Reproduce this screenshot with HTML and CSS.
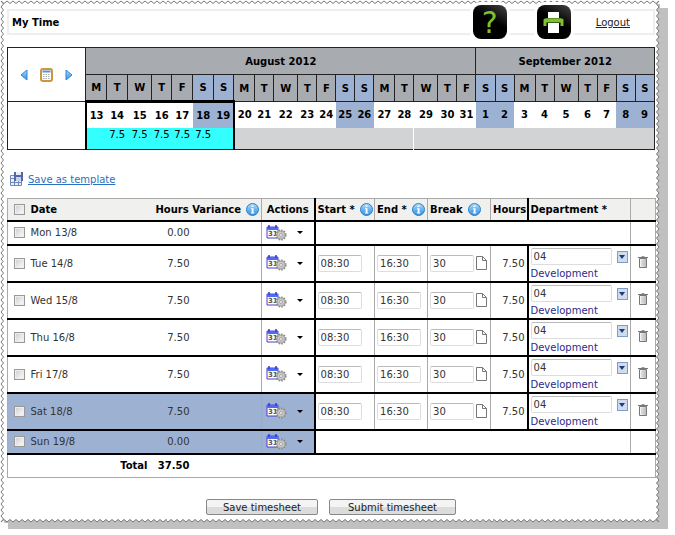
FILE: index.html
```html
<!DOCTYPE html>
<html lang="en">
  <head>
    <meta charset="UTF-8" />
    <meta name="viewport" content="width=device-width, initial-scale=1.0" />
    <title>My Time</title>
    <link rel="stylesheet" href="styles.css">
  </head>
  <body>
    <!-- Shared icons -->
    <svg class="sprite" aria-hidden="true">
      <defs>
        <linearGradient id="blue" x1="0" y1="0" x2="0" y2="1">
          <stop offset="0" stop-color="#a9dcff" />
          <stop offset="1" stop-color="#2f8fe0" />
        </linearGradient>
        <linearGradient id="bin" x1="0" y1="0" x2="1" y2="0">
          <stop offset="0" stop-color="#fff" />
          <stop offset="1" stop-color="#b8b8b8" />
        </linearGradient>
      </defs>
      <symbol id="info" viewBox="0 0 13 13">
        <circle cx="6.5" cy="6.5" r="6" fill="url(#blue)" stroke="#2a80cc" />
        <path d="M5.5 2.5h2v1.6h-2zM5 5.2h2.5v4.3h.8v1H4.9v-1h.8V6.2H5z" fill="#fff" />
      </symbol>
      <symbol id="actions" viewBox="0 0 22 16">
        <path d="M1 2h11v11H1z" fill="#fff" stroke="#4a3fd0" />
        <path d="M1 2h11v3H1z" fill="#4b6cf5" />
        <path d="M3 0v3M10 0v3" stroke="#3b36c8" stroke-width="1.5" />
        <text x="2" y="11" font-size="7" font-weight="bold" fill="#555">31</text>
        <circle cx="15" cy="10" r="4.7" fill="#c4c4c4" stroke="#8c8c8c" stroke-width="1.8" stroke-dasharray="1.6 1.1" />
        <circle cx="15" cy="10" r="3.8" fill="#c9c9c9" stroke="#9a9a9a" stroke-width=".6" />
        <circle cx="15" cy="10" r="1.5" fill="#eee" stroke="#8a8a8a" stroke-width=".6" />
      </symbol>
      <symbol id="note" viewBox="0 0 11 14">
        <path d="M.5.5h6l4 4v9H.5zM6.5.5v4h4" fill="#fff" stroke="#777" />
      </symbol>
      <symbol id="trash" viewBox="0 0 10 12">
        <path d="M1.5 2.5h7v9h-7z" fill="url(#bin)" stroke="#777" />
        <path d="M0 1.5h10" stroke="#777" />
        <path d="M3.5 .5h3" stroke="#999" />
        <path d="M4 4v6M6 4v6" stroke="#bbb" stroke-width=".7" />
      </symbol>
    </svg>

    <div class="shadow">
    <div class="sheet">
      <header class="topbar">
        <h1>My Time</h1>
        <a class="tile help" href="#" aria-label="Help">?</a>
        <a class="tile print" href="#" aria-label="Print">
          <svg width="21" height="23" viewBox="0 0 21 23">
            <path d="M5 1h11v6H5z" fill="#fff" />
            <path d="M2 15V9h17v6" fill="none" stroke="#7fc02e" stroke-width="3" stroke-linejoin="round" />
            <path d="M5 12h11v10H5z" fill="#fff" />
            <path d="M3 9.500h15" stroke="#7fc02e" stroke-width="4" />
          </svg>
        </a>
        <a class="logout" href="#">Logout</a>
      </header>

      <table class="calendar">
        <colgroup>
          <col class="w78"><col class="w21"><col class="w21"><col class="w24"><col class="w20"><col class="w21"><col class="w21"><col class="w20">
          <col class="w21"><col class="w19"><col class="w24"><col class="w19"><col class="w19"><col class="w19"><col class="w19">
          <col class="w21"><col class="w19"><col class="w24"><col class="w19"><col class="w19"><col class="w19"><col class="w19">
          <col class="w21"><col class="w19"><col class="w24"><col class="w19"><col class="w19"><col class="w19"><col class="w19">
        </colgroup>
        <tr class="months">
          <td rowspan="2">
            <div class="pager">
              <button aria-label="Previous"><svg width="8" height="12" viewBox="0 0 8 12"><path d="M7 1v10L1 6z" fill="url(#blue)" stroke="#2f86d8" /></svg></button>
              <button aria-label="Pick date"><svg width="13" height="14" viewBox="0 0 13 14"><rect x="1" y="1" width="11" height="12" rx="2" fill="#fff" stroke="#c8963c" stroke-width="2" /><path d="M2.500 3.500h8" stroke="#5b8fd0" stroke-width="2" /><path d="M3 6.500h7M3 8.500h7M3 10.500h7" stroke="#aaa" stroke-dasharray="1.500 1" /></svg></button>
              <button aria-label="Next"><svg width="8" height="12" viewBox="0 0 8 12"><path d="M1 1v10l6-5z" fill="url(#blue)" stroke="#2f86d8" /></svg></button>
            </div>
          </td>
          <th colspan="19">August 2012</th>
          <th colspan="9">September 2012</th>
        </tr>
        <tr class="days">
          <th>M</th><th>T</th><th>W</th><th>T</th><th>F</th><th class="we">S</th><th class="we">S</th>
          <th>M</th><th>T</th><th>W</th><th>T</th><th>F</th><th class="we">S</th><th class="we">S</th>
          <th>M</th><th>T</th><th>W</th><th>T</th><th>F</th><th class="we">S</th><th class="we">S</th>
          <th>M</th><th>T</th><th>W</th><th>T</th><th>F</th><th class="we">S</th><th class="we">S</th>
        </tr>
        <tr class="dates">
          <td class="side" rowspan="2"></td>
          <td class="now first">13</td><td class="now">14</td><td class="now">15</td><td class="now">16</td><td class="now">17</td><td class="now we">18</td><td class="now last we">19</td>
          <td>20</td><td>21</td><td>22</td><td>23</td><td>24</td><td class="we">25</td><td class="we">26</td>
          <td>27</td><td>28</td><td>29</td><td>30</td><td>31</td><td class="we">1</td><td class="we">2</td>
          <td>3</td><td>4</td><td>5</td><td>6</td><td>7</td><td class="we">8</td><td class="we">9</td>
        </tr>
        <tr class="totals">
          <td class="filled first"></td><td class="filled">7.5</td><td class="filled">7.5</td><td class="filled">7.5</td><td class="filled">7.5</td><td class="filled">7.5</td><td class="filled last"></td>
          <td class="split" colspan="9"></td><td colspan="12"></td>
        </tr>
      </table>

      <a class="template" href="#">
        <svg width="14" height="14" viewBox="0 0 14 14">
          <path d="M.5 3.500h11v10H.5z" fill="#e8eefc" stroke="#6f86bd" />
          <path d="M.5 6.500h11M.5 10.500h11M4.500 3.500v10M8.500 3.500v10" stroke="#6f86bd" />
          <path d="M4 0h9v9H4z" fill="#5566a8" />
          <path d="M6 0h5v3H6z" fill="#e8ecf6" /><path d="M6 5h5v4H6z" fill="#c9d2ec" />
        </svg>
        <span>Save as template</span>
      </a>

      <form>
        <table class="timesheet">
          <colgroup>
            <col class="c-check"><col class="c-date"><col class="c-total"><col class="c-info"><col class="c-actions"><col class="c-start"><col class="c-end"><col class="c-break"><col class="c-hours"><col class="c-dept"><col class="c-trash">
          </colgroup>
          <thead>
            <tr>
              <th><input type="checkbox" aria-label="Select all"></th>
              <th>Date</th>
              <th class="variance" colspan="2"><span class="label">Hours Variance <svg class="info"><use href="#info" /></svg></span></th>
              <th class="line center">Actions</th>
              <th class="thick"><span class="label">Start * <svg class="info"><use href="#info" /></svg></span></th>
              <th class="line"><span class="label">End * <svg class="info"><use href="#info" /></svg></span></th>
              <th class="line"><span class="label">Break <svg class="info"><use href="#info" /></svg></span></th>
              <th class="line">Hours</th>
              <th class="thick">Department *</th>
              <th class="line"></th>
            </tr>
          </thead>
          <tbody>
            <tr>
              <td><input type="checkbox" id="mon"></td>
              <td><label for="mon">Mon 13/8</label></td>
              <td class="num">0.00</td><td></td>
              <td class="line"><button type="button" class="menu" aria-label="Actions"><svg class="act"><use href="#actions" /></svg></button></td>
              <td class="thick" colspan="5"></td>
              <td class="line"></td>
            </tr>
            <tr class="work">
              <td><input type="checkbox" id="tue"></td>
              <td><label for="tue">Tue 14/8</label></td>
              <td class="num">7.50</td><td></td>
              <td class="line"><button type="button" class="menu" aria-label="Actions"><svg class="act"><use href="#actions" /></svg></button></td>
              <td class="thick"><input type="text" aria-label="Start" value="08:30"></td>
              <td class="line"><input type="text" aria-label="End" value="16:30"></td>
              <td class="line"><div class="break"><input type="text" aria-label="Break" value="30"><button type="button" aria-label="Note"><svg class="note"><use href="#note" /></svg></button></div></td>
              <td class="line num">7.50</td>
              <td class="thick dept"><div class="pick"><input type="text" aria-label="Department" value="04"><button type="button" class="drop" aria-label="Choose department"></button></div><span>Development</span></td>
              <td class="line center"><button type="button" aria-label="Delete"><svg class="trash"><use href="#trash" /></svg></button></td>
            </tr>
            <tr class="work">
              <td><input type="checkbox" id="wed"></td>
              <td><label for="wed">Wed 15/8</label></td>
              <td class="num">7.50</td><td></td>
              <td class="line"><button type="button" class="menu" aria-label="Actions"><svg class="act"><use href="#actions" /></svg></button></td>
              <td class="thick"><input type="text" aria-label="Start" value="08:30"></td>
              <td class="line"><input type="text" aria-label="End" value="16:30"></td>
              <td class="line"><div class="break"><input type="text" aria-label="Break" value="30"><button type="button" aria-label="Note"><svg class="note"><use href="#note" /></svg></button></div></td>
              <td class="line num">7.50</td>
              <td class="thick dept"><div class="pick"><input type="text" aria-label="Department" value="04"><button type="button" class="drop" aria-label="Choose department"></button></div><span>Development</span></td>
              <td class="line center"><button type="button" aria-label="Delete"><svg class="trash"><use href="#trash" /></svg></button></td>
            </tr>
            <tr class="work">
              <td><input type="checkbox" id="thu"></td>
              <td><label for="thu">Thu 16/8</label></td>
              <td class="num">7.50</td><td></td>
              <td class="line"><button type="button" class="menu" aria-label="Actions"><svg class="act"><use href="#actions" /></svg></button></td>
              <td class="thick"><input type="text" aria-label="Start" value="08:30"></td>
              <td class="line"><input type="text" aria-label="End" value="16:30"></td>
              <td class="line"><div class="break"><input type="text" aria-label="Break" value="30"><button type="button" aria-label="Note"><svg class="note"><use href="#note" /></svg></button></div></td>
              <td class="line num">7.50</td>
              <td class="thick dept"><div class="pick"><input type="text" aria-label="Department" value="04"><button type="button" class="drop" aria-label="Choose department"></button></div><span>Development</span></td>
              <td class="line center"><button type="button" aria-label="Delete"><svg class="trash"><use href="#trash" /></svg></button></td>
            </tr>
            <tr class="work">
              <td><input type="checkbox" id="fri"></td>
              <td><label for="fri">Fri 17/8</label></td>
              <td class="num">7.50</td><td></td>
              <td class="line"><button type="button" class="menu" aria-label="Actions"><svg class="act"><use href="#actions" /></svg></button></td>
              <td class="thick"><input type="text" aria-label="Start" value="08:30"></td>
              <td class="line"><input type="text" aria-label="End" value="16:30"></td>
              <td class="line"><div class="break"><input type="text" aria-label="Break" value="30"><button type="button" aria-label="Note"><svg class="note"><use href="#note" /></svg></button></div></td>
              <td class="line num">7.50</td>
              <td class="thick dept"><div class="pick"><input type="text" aria-label="Department" value="04"><button type="button" class="drop" aria-label="Choose department"></button></div><span>Development</span></td>
              <td class="line center"><button type="button" aria-label="Delete"><svg class="trash"><use href="#trash" /></svg></button></td>
            </tr>
            <tr class="work weekend">
              <td><input type="checkbox" id="sat"></td>
              <td><label for="sat">Sat 18/8</label></td>
              <td class="num">7.50</td><td></td>
              <td class="line"><button type="button" class="menu" aria-label="Actions"><svg class="act"><use href="#actions" /></svg></button></td>
              <td class="thick"><input type="text" aria-label="Start" value="08:30"></td>
              <td class="line"><input type="text" aria-label="End" value="16:30"></td>
              <td class="line"><div class="break"><input type="text" aria-label="Break" value="30"><button type="button" aria-label="Note"><svg class="note"><use href="#note" /></svg></button></div></td>
              <td class="line num">7.50</td>
              <td class="thick dept"><div class="pick"><input type="text" aria-label="Department" value="04"><button type="button" class="drop" aria-label="Choose department"></button></div><span>Development</span></td>
              <td class="line center"><button type="button" aria-label="Delete"><svg class="trash"><use href="#trash" /></svg></button></td>
            </tr>
            <tr class="weekend">
              <td><input type="checkbox" id="sun"></td>
              <td><label for="sun">Sun 19/8</label></td>
              <td class="num">0.00</td><td></td>
              <td class="line"><button type="button" class="menu" aria-label="Actions"><svg class="act"><use href="#actions" /></svg></button></td>
              <td class="thick" colspan="5"></td>
              <td class="line"></td>
            </tr>
          </tbody>
          <tfoot>
            <tr>
              <th class="total" colspan="2">Total</th>
              <th class="num">37.50</th>
              <td colspan="8"></td>
            </tr>
          </tfoot>
        </table>

        <div class="buttons">
          <button type="button" class="save">Save timesheet</button>
          <button type="button" class="submit">Submit timesheet</button>
        </div>
      </form>
    </div>
    </div>
  </body>
</html>
```
FILE: styles.css
```css
* {
  box-sizing: border-box;
}

body {
  margin: 0 7px 7px 0;
  background: #fff;
  color: #333;
  font-family: "DejaVu Sans", Verdana, sans-serif;
  font-size: 10px;
  line-height: 13px;
}

button {
  padding: 0;
  border: none;
  background: none;
  font: inherit;
  color: inherit;
  cursor: pointer;
}

svg {
  display: block;
}

.sprite {
  position: absolute;
  width: 0;
  height: 0;
  visibility: hidden;
}

/* Grey slab behind the sheet, starts 8px in from the top left */
.shadow {
  padding: 0 8px 6px 0;
  background: linear-gradient(#c0c0c0, #c0c0c0) 8px 8px no-repeat;
}

/* Torn paper edge */
.sheet {
  padding: 5px 1px 4px 3px;
  border: 4px solid transparent;
  border-image: url("data:image/svg+xml,%3Csvg xmlns='http://www.w3.org/2000/svg' width='14' height='14'%3E%3Cpath d='M14 4L10.500 4L13 7L10.500 10L7 13L4 10.500L4 14L14 14z' fill='%23c0c0c0'/%3E%3Cpath d='M4 3.500L7 1L10 3.500L13 1L10.500 4L13 7L10.500 10L13 13L10 10.500L7 13L4 10.500L1 13L3.500 10L1 7L3.500 4L1 1z' fill='none' stroke='%23777'/%3E%3C/svg%3E") 4 / 4px round;
  background: #fff;
}

.topbar {
  display: flex;
  align-items: center;
  height: 26px;
  padding: 0 23px 0 3px;
  border: 2px solid #eee;
}

.topbar h1 {
  flex: 1;
  margin: 0;
  color: #000;
  font-size: 10px;
}

.tile {
  display: flex;
  justify-content: center;
  align-items: center;
  width: 34px;
  height: 34px;
  margin: -6px 25px -6px 5px;
  border-radius: 8px;
  background: linear-gradient(210deg, #444, #000 45%);
  box-shadow: 0 0 0 3px #fff;
  color: #7fc02e;
  font-size: 30px;
  text-decoration: none;
}

.logout {
  color: #222;
}

/* Calendar strip */
.calendar {
  width: 100%;
  margin-top: 12px;
  border: 1px solid #222;
  border-collapse: collapse;
  table-layout: fixed;
  color: #000;
  font-weight: bold;
  text-align: center;
}

.calendar td,
.calendar th {
  padding: 0;
}

.w78 { width: 78px; }
.w24 { width: 24px; }
.w21 { width: 21px; }
.w20 { width: 20px; }
.w19 { width: 19px; }

.months,
.days {
  height: 27px;
}

.months td,
.months th,
.days th,
.calendar .side {
  border: 1px solid #222;
}

.months th,
.days th {
  background: #a8abb0;
}

.dates {
  height: 26px;
}

.calendar .we {
  background: #9db1d3;
}

.totals {
  height: 22px;
  font-weight: normal;
}

.totals td {
  background: #d2d3d5;
  vertical-align: top;
}

.totals .filled {
  background: #3ff;
}

.totals .split {
  border-right: 1px solid #fff;
}

.calendar .now {
  border-top: 3px solid #000;
}

.calendar .first {
  border-left: 2px solid #000;
}

.calendar .last {
  border-right: 2px solid #000;
}

.pager {
  display: flex;
  justify-content: center;
  align-items: center;
  gap: 12px;
}

.template {
  display: inline-flex;
  align-items: center;
  gap: 4px;
  margin: 22px 0 12px 3px;
  color: #2a70c0;
}

/* Timesheet */
.timesheet {
  width: 100%;
  border: 1px solid #aaa;
  border-collapse: collapse;
  table-layout: fixed;
}

.c-check { width: 21px; }
.c-date { width: 123px; }
.c-total { width: 40px; }
.c-info { width: 70px; }
.c-actions { width: 53px; }
.c-start { width: 60px; }
.c-end { width: 53px; }
.c-break { width: 63px; }
.c-hours { width: 37px; }
.c-dept { width: 103px; }
.c-trash { width: 25px; }

.timesheet tr {
  height: 24px;
}

.timesheet thead tr {
  height: 22px;
}

.timesheet .work {
  height: 37px;
}

.timesheet th,
.timesheet td {
  padding: 0 2px;
  text-align: left;
  white-space: nowrap;
}

.timesheet th {
  color: #000;
}

.timesheet thead {
  background: #f0f0ee;
}

.timesheet tbody tr {
  border-top: 2px solid #000;
  border-bottom: 2px solid #000;
}

.timesheet .line {
  border-left: 1px solid #aaa;
}

.timesheet .thick {
  border-left: 2px solid #000;
}

.weekend td:nth-child(-n + 5) {
  background: #9db1d3;
}

.timesheet .num,
.timesheet .variance {
  text-align: right;
}

.timesheet .total {
  padding-right: 4px;
  text-align: right;
}

.timesheet .center {
  text-align: center;
}

.label {
  display: inline-flex;
  align-items: center;
  gap: 5px;
}

.info {
  width: 13px;
  height: 13px;
}

.timesheet input[type="checkbox"] {
  appearance: none;
  display: block;
  width: 11px;
  height: 11px;
  margin: 0 0 0 4px;
  border: 1px solid #999;
  background: linear-gradient(135deg, #ccc, #fff);
  box-shadow: inset 0 0 0 1px #eee;
}

.timesheet input[type="text"] {
  display: block;
  width: 44px;
  height: 17px;
  padding: 0 2px;
  border: 1px solid #ddd;
  border-top-color: #bbb;
  border-radius: 2px;
  background: #fff;
  color: #333;
  font: inherit;
}

.menu {
  display: flex;
  align-items: center;
  gap: 9px;
  padding-left: 2px;
}

.menu::after {
  content: "";
  border: 3px solid transparent;
  border-top-color: #000;
  border-bottom: none;
}

.act {
  width: 22px;
  height: 16px;
}

.break,
.pick {
  display: flex;
  align-items: center;
  gap: 2px;
}

.note {
  width: 11px;
  height: 14px;
}

.trash {
  width: 10px;
  height: 12px;
}

.pick {
  gap: 5px;
  margin: 2px 0;
}

.timesheet .pick input {
  width: 81px;
}

.dept span {
  display: block;
  color: #2a2a8c;
}

.drop {
  display: flex;
  justify-content: center;
  align-items: center;
  width: 12px;
  height: 12px;
  border: 1px solid #7d9cc8;
  background: #cfdcf0;
}

.drop::after {
  content: "";
  border: 3px solid transparent;
  border-top: 4px solid #223a78;
  border-bottom: none;
}

.buttons {
  display: flex;
  justify-content: center;
  gap: 11px;
  margin-top: 21px;
}

.buttons button {
  height: 16px;
  border: 1px solid #888;
  border-radius: 2px;
  background: linear-gradient(#f4f4f4 50%, #dcdcdc 50%);
  color: #222;
}

.buttons .save {
  min-width: 112px;
}

.buttons .submit {
  min-width: 127px;
}
```
